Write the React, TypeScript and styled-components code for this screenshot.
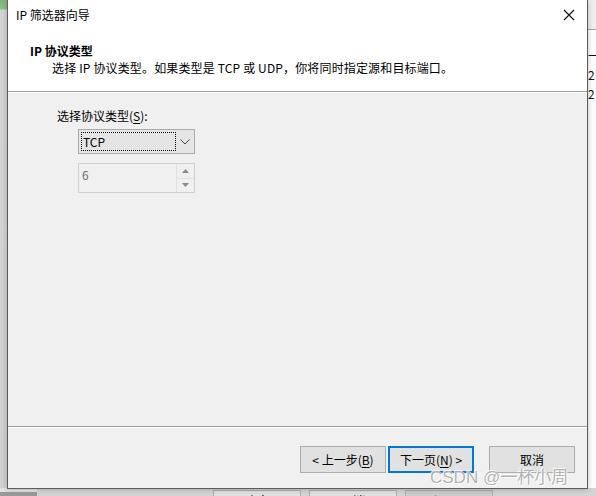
import React from "react";
import styled, { createGlobalStyle } from "styled-components";

const GlobalStyle = createGlobalStyle`
  html, body {
    margin: 0;
    padding: 0;
    background: #e6e6e6;
  }
  body {
    font-family: "Noto Sans CJK SC", "Microsoft YaHei", "Noto Sans", sans-serif;
    font-size: 12px;
    color: #000;
  }
`;

const Desktop = styled.div`
  position: relative;
  width: 596px;
  height: 496px;
  overflow: hidden;
  background: #dcdcdc;
`;

/* the property sheet that sits behind the wizard */
const BackStrip = styled.div`
  position: absolute;
  top: 0;
  left: 0;
  width: 8px;
  height: 100%;
  background: linear-gradient(#7fb27f 0, #8fbf8f 9px, #d6d6d6 10px, #d2d2d2 100%);
`;

const BackRight = styled.div`
  position: absolute;
  top: 0;
  right: 0;
  width: 9px;
  height: 100%;
  background: #f0f0f0;
  display: flex;
  flex-direction: column;
`;

const BackRightHead = styled.div`
  height: 29px;
  border-bottom: 1px solid #a5a5a5;
  background: #f0f0f0;
`;

const BackRightList = styled.div`
  flex: 1;
  background: #fff;
  padding: 17px 0 0 1px;
  display: flex;
  flex-direction: column;
  gap: 2px;
  line-height: 17px;
  font-size: 12px;
  color: #111;
  overflow: hidden;
  white-space: nowrap;
`;

const BackBottom = styled.div`
  position: absolute;
  left: 0;
  bottom: 0;
  width: 100%;
  height: 8px;
  background: #d4d4d4;
  display: flex;
  align-items: flex-start;
  overflow: hidden;
`;

const BackEdge = styled.div`
  width: 37px;
  height: 100%;
  background: #e4e4e4;
  border-bottom: 4px solid #9a9a9a;
  box-sizing: border-box;
`;

const BackButton = styled.div<{ $w: number; $dim?: boolean }>`
  width: ${(p) => p.$w}px;
  height: 20px;
  margin-left: 8px;
  margin-top: 2px;
  background: ${(p) => (p.$dim ? "#cccccc" : "#e1e1e1")};
  border: 1px solid #adadad;
  text-align: center;
  line-height: 20px;
  color: ${(p) => (p.$dim ? "#8a8a8a" : "#000")};
`;

const Window = styled.div`
  position: absolute;
  left: 7px;
  top: 0;
  width: 581px;
  height: 489px;
  box-sizing: border-box;
  border: 1px solid #5c5c5c;
  border-top: none;
  background: #f0f0f0;
  display: flex;
  flex-direction: column;
  box-shadow: 0 0 6px rgba(0, 0, 0, 0.25);
`;

const TitleBar = styled.div`
  height: 30px;
  background: #fff;
  display: flex;
  align-items: center;
  justify-content: space-between;
  padding: 0 8px 0 8px;
`;

const TitleText = styled.span`
  font-size: 12px;
  line-height: 16px;
`;

const CloseButton = styled.div`
  width: 24px;
  height: 24px;
  display: flex;
  align-items: center;
  justify-content: center;
  margin-right: -2px;
`;

const Header = styled.div`
  height: 62px;
  background: #fff;
  padding: 13px 0 0 22px;
  box-sizing: border-box;
  border-bottom: 1px solid #a0a0a0;
  box-shadow: 0 1px 0 #fff;
`;

const HeaderTitle = styled.div`
  font-weight: bold;
  line-height: 16px;
`;

const HeaderSub = styled.div`
  line-height: 17px;
  padding-left: 22px;
  letter-spacing: 0.15px;
`;

const Body = styled.div`
  flex: 1;
  padding: 16px 0 0 49px;
  display: flex;
  flex-direction: column;
  align-items: flex-start;
`;

const Label = styled.div`
  line-height: 16px;
  u {
    text-decoration: underline;
    text-underline-offset: 2px;
  }
`;

const Combo = styled.div`
  margin: 5px 0 0 21px;
  width: 117px;
  height: 25px;
  box-sizing: border-box;
  border: 1px solid #acacac;
  background: #e5e5e5;
  display: flex;
  align-items: center;
  padding: 0 0 0 2px;
`;

const ComboValue = styled.div`
  flex: 1;
  height: 19px;
  box-sizing: border-box;
  border: 1px dotted #000;
  padding-left: 1px;
  line-height: 17px;
`;

const ComboArrow = styled.div`
  width: 18px;
  display: flex;
  align-items: center;
  justify-content: center;
`;

const Spin = styled.div`
  margin: 9px 0 0 21px;
  width: 117px;
  height: 30px;
  box-sizing: border-box;
  border: 1px solid #cfcfcf;
  background: #f0f0f0;
  display: flex;
`;

const SpinValue = styled.div`
  flex: 1;
  padding: 3px 0 0 3px;
  color: #6d6d6d;
  line-height: 16px;
`;

const SpinButtons = styled.div`
  width: 17px;
  display: flex;
  flex-direction: column;
  border-left: 1px solid #e0e0e0;
`;

const SpinButton = styled.div<{ $top?: boolean }>`
  flex: 1;
  display: flex;
  align-items: center;
  justify-content: center;
  background: #f0f0f0;
  border-bottom: ${(p) => (p.$top ? "1px solid #e0e0e0" : "none")};
`;

const Footer = styled.div`
  height: 62px;
  box-sizing: border-box;
  border-top: 1px solid #a0a0a0;
  box-shadow: inset 0 1px 0 #fff;
  display: flex;
  justify-content: flex-end;
  align-items: flex-start;
  padding: 19px 12px 0 0;
`;

const Button = styled.div<{ $default?: boolean; $gap?: number }>`
  width: 86px;
  height: 27px;
  box-sizing: border-box;
  margin-left: ${(p) => p.$gap ?? 0}px;
  border: ${(p) => (p.$default ? "2px solid #0078d7" : "1px solid #adadad")};
  background: #e1e1e1;
  display: flex;
  align-items: center;
  justify-content: center;
  line-height: 16px;
  u {
    text-decoration: underline;
    text-underline-offset: 2px;
  }
`;

const Watermark = styled.div`
  position: absolute;
  left: 430px;
  top: 468px;
  font-family: "Liberation Sans", "Noto Sans CJK SC", sans-serif;
  font-size: 17px;
  line-height: 20px;
  color: rgba(150, 150, 150, 0.75);
  text-shadow: 0 0 1px #fff, 1px 1px 0 rgba(255, 255, 255, 0.8), -1px -1px 0 rgba(255, 255, 255, 0.8);
  white-space: nowrap;
`;

const Chevron = () => (
  <svg width="10" height="6" viewBox="0 0 10 6">
    <path d="M0.5 0.5 L5 5 L9.5 0.5" fill="none" stroke="#444" strokeWidth="1" />
  </svg>
);

const Triangle = ({ up }: { up?: boolean }) => (
  <svg width="7" height="4" viewBox="0 0 7 4">
    <path d={up ? "M0 4 L3.5 0 L7 4 Z" : "M0 0 L3.5 4 L7 0 Z"} fill="#8a8a8a" />
  </svg>
);

const App = () => {
  return (
    <>
      <GlobalStyle />
      <Desktop>
        <BackStrip />
        <BackRight>
          <BackRightHead />
          <BackRightList>
            <span>一</span>
            <span>2</span>
            <span>2</span>
          </BackRightList>
        </BackRight>
        <BackBottom>
          <BackEdge />
          <BackButton $w={86} style={{ marginLeft: 176 }}>
            确定
          </BackButton>
          <BackButton $w={86}>取消</BackButton>
          <BackButton $w={86} $dim>
            应用(A)
          </BackButton>
        </BackBottom>

        <Window>
          <TitleBar>
            <TitleText>IP 筛选器向导</TitleText>
            <CloseButton>
              <svg width="12" height="12" viewBox="0 0 12 12">
                <path d="M1 1 L11 11 M11 1 L1 11" stroke="#111" strokeWidth="1.1" />
              </svg>
            </CloseButton>
          </TitleBar>
          <Header>
            <HeaderTitle>IP 协议类型</HeaderTitle>
            <HeaderSub>
              选择 IP 协议类型。如果类型是 TCP 或 UDP，你将同时指定源和目标端口。
            </HeaderSub>
          </Header>
          <Body>
            <Label>
              选择协议类型(<u>S</u>):
            </Label>
            <Combo>
              <ComboValue>TCP</ComboValue>
              <ComboArrow>
                <Chevron />
              </ComboArrow>
            </Combo>
            <Spin>
              <SpinValue>6</SpinValue>
              <SpinButtons>
                <SpinButton $top>
                  <Triangle up />
                </SpinButton>
                <SpinButton>
                  <Triangle />
                </SpinButton>
              </SpinButtons>
            </Spin>
          </Body>
          <Footer>
            <Button>
              &lt; 上一步(<u>B</u>)
            </Button>
            <Button $default $gap={2}>
              下一页(<u>N</u>) &gt;
            </Button>
            <Button $gap={15}>取消</Button>
          </Footer>
        </Window>
        <Watermark>CSDN @一杯小周</Watermark>
      </Desktop>
    </>
  );
};

export default App;
